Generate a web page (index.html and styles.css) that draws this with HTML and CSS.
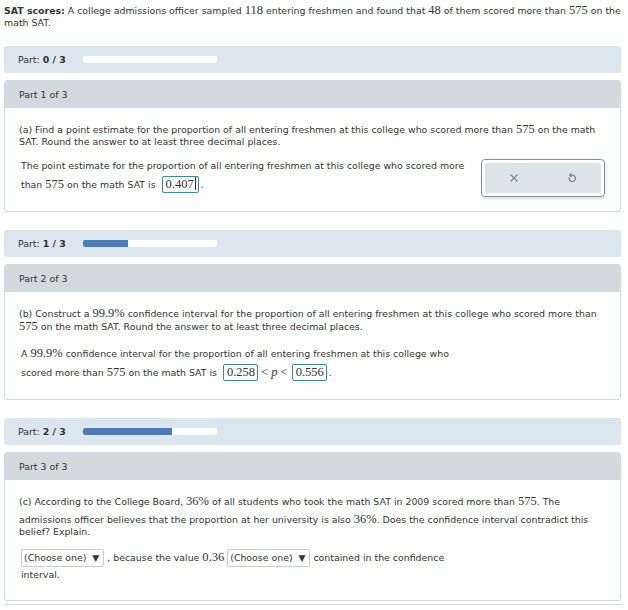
FILE: index.html
```html
<!DOCTYPE html>
<html>
<head>
<meta charset="utf-8">
<link rel="stylesheet" href="styles.css">
</head>
<body>
<div class="page">
  <p class="intro"><b>SAT scores:</b> A college admissions officer sampled <span class="m">118</span> entering freshmen and found that <span class="m">48</span> of them scored more than <span class="m">575</span> on the math SAT.</p>

  <div class="progress">
    <span class="plabel">Part: <b>0 / 3</b></span>
    <div class="track"><div class="fill" style="width:0%"></div></div>
  </div>

  <div class="panel">
    <div class="phead">Part 1 of 3</div>
    <div class="pbody">
      <p class="q q1">(a) Find a point estimate for the proportion of all entering freshmen at this college who scored more than <span class="m">575</span> on the math SAT. Round the answer to at least three decimal places.</p>
      <div class="answer-row">
        <p class="ans wide">The point estimate for the proportion of all entering freshmen at this college who scored more than <span class="m">575</span> on the math SAT is <span class="inp">0.407<span class="caret"></span></span>.</p>
        <div class="tools">
          <div class="tools-in">
            <svg width="12" height="12" viewBox="0 0 12 12"><path d="M2.5 2.5 L9.5 9.5 M9.5 2.5 L2.5 9.5" stroke="#6f878d" stroke-width="1.1" fill="none"/></svg>
            <svg width="12" height="12" viewBox="0 0 12 12"><path d="M3.3 5.2 A3.2 3.2 0 1 0 6 3.2 L4.6 3.2" stroke="#6f878d" stroke-width="1.2" fill="none"/><path d="M5.6 1.4 L3.6 3.2 L5.6 5" stroke="#6f878d" stroke-width="1.2" fill="none"/></svg>
          </div>
        </div>
      </div>
    </div>
  </div>

  <div class="progress">
    <span class="plabel">Part: <b>1 / 3</b></span>
    <div class="track"><div class="fill" style="width:33.3%"></div></div>
  </div>

  <div class="panel">
    <div class="phead">Part 2 of 3</div>
    <div class="pbody">
      <p class="q">(b) Construct a <span class="m">99.9%</span> confidence interval for the proportion of all entering freshmen at this college who scored more than <span class="m">575</span> on the math SAT. Round the answer to at least three decimal places.</p>
      <p class="ans ans2">A <span class="m">99.9%</span> confidence interval for the proportion of all entering freshmen at this college who<br>scored more than <span class="m">575</span> on the math SAT is <span class="inp">0.258</span><span class="m rel">&lt; <i>p</i> &lt;</span><span class="inp">0.556</span>.</p>
    </div>
  </div>

  <div class="progress">
    <span class="plabel">Part: <b>2 / 3</b></span>
    <div class="track"><div class="fill" style="width:66.6%"></div></div>
  </div>

  <div class="panel">
    <div class="phead">Part 3 of 3</div>
    <div class="pbody">
      <p class="q">(c) According to the College Board, <span class="m">36%</span> of all students who took the math SAT in 2009 scored more than <span class="m">575</span>. The admissions officer believes that the proportion at her university is also <span class="m tall">36%</span>. Does the confidence interval contradict this belief? Explain.</p>
      <p class="ans ans3"><span class="sel">(Choose one) <span class="arr">▼</span></span> , because the value <span class="m">0.36</span> <span class="sel">(Choose one) <span class="arr">▼</span></span> contained in the confidence<br>interval.</p>
    </div>
  </div>
  <div class="next"></div>
</div>
</body>
</html>
```

FILE: styles.css
```css
html, body {
  margin: 0;
  padding: 0;
  background: #fff;
}
body {
  font-family: "DejaVu Sans", Verdana, sans-serif;
  font-size: 9.4px;
  color: #333;
}
.page {
  padding: 4px 7px 0 4px;
}
p { margin: 0; }
.intro {
  line-height: 12px;
  margin-bottom: 17px;
}
.m {
  font-family: "Liberation Serif", "Times New Roman", serif;
  font-size: 12.5px;
}
.tall {
  display: inline-block;
  padding-top: 5px;
  line-height: 12px;
}
.progress {
  background: #dbe6ef;
  border-radius: 3px;
  height: 27px;
  display: flex;
  align-items: center;
  padding-left: 14px;
  margin-bottom: 7px;
}
.plabel {
  width: 65px;
}
.track {
  width: 134px;
  height: 7px;
  background: #fff;
  border-radius: 2px;
  overflow: hidden;
}
.fill {
  height: 100%;
  background: #4a7db5;
}
.panel {
  border: 1px solid #d2d9dc;
  border-radius: 3px;
  margin-bottom: 18px;
  overflow: hidden;
}
.phead {
  background: #d3dadd;
  height: 27px;
  line-height: 27px;
  padding-left: 14px;
}
.pbody {
  padding: 15px 14px 17px 14px;
}
.q {
  line-height: 12px;
  margin-bottom: 11px;
}
.q.q1 { margin-bottom: 9px; }
.ans {
  line-height: 18px;
  padding-left: 2px;
}
.ans2 { line-height: 19px; }
.ans3 { line-height: 16px; }
.answer-row {
  display: flex;
  align-items: flex-start;
  justify-content: space-between;
}
.ans.wide { width: 452px; }
.inp {
  display: inline-block;
  border: 1px solid #3d8b99;
  border-radius: 2px;
  font-family: "Liberation Serif", "Times New Roman", serif;
  font-size: 12.5px;
  line-height: 15px;
  padding: 0 2px 0 3px;
  margin: 0 2px 0 3px;
}
.caret {
  display: inline-block;
  width: 1px;
  height: 13px;
  background: #333;
  vertical-align: -2px;
  margin-left: 1px;
}
.rel { padding: 0 1px; }
.tools {
  width: 116px;
  height: 30px;
  border: 1px solid #7f9499;
  border-radius: 4px;
  padding: 3px;
  box-shadow: 1px 2px 3px rgba(0,0,0,0.12);
  margin-top: 2px;
  margin-bottom: -6px;
  margin-right: 1px;
}
.tools-in {
  background: #dde4e7;
  height: 100%;
  border-radius: 2px;
  display: flex;
  align-items: center;
  justify-content: space-around;
}
.sel {
  display: inline-block;
  border: 1px solid #ccc;
  border-radius: 2px;
  line-height: 15px;
  padding: 0 4px 0 2px;
  background: #fff;
}
.arr { font-size: 9px; margin-left: 3px; }
.next {
  border-top: 1px solid #d2d9dc;
  margin-top: -15px;
  height: 6px;
}
```
